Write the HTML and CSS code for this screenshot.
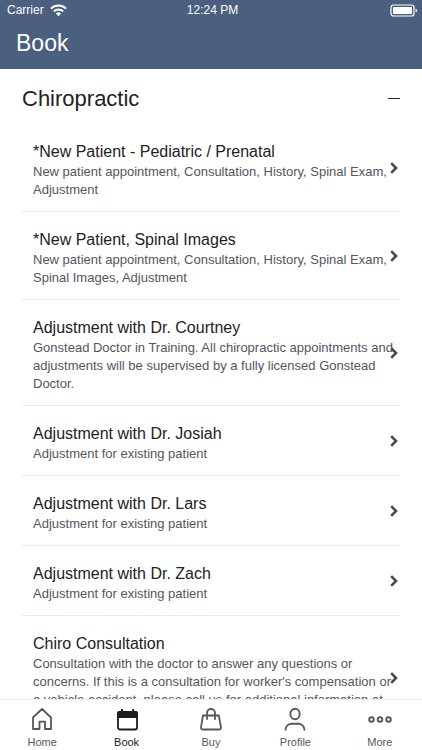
FILE: index.html
```html
<!DOCTYPE html>
<html lang="en">
<head>
<meta charset="utf-8">
<meta name="viewport" content="width=device-width, initial-scale=1">
<title>Book</title>
<link rel="stylesheet" href="styles.css">
</head>
<body>
<svg class="sprite" aria-hidden="true">
  <symbol id="chevron" viewBox="0 0 8 12"><path d="M1.2 1.2 6 6 1.2 10.8" fill="none" stroke="currentColor" stroke-width="2.6"/></symbol>
</svg>
<header class="header">
  <div class="status">
    <div class="carrier">
      <span>Carrier</span>
      <svg width="17" height="13" viewBox="0 0 17 13" aria-hidden="true">
        <path d="M1 4.6a10.8 10.8 0 0 1 15 0M3.8 7.4a6.8 6.8 0 0 1 9.4 0" fill="none" stroke="#fff" stroke-width="2"/>
        <path d="M5.9 9.4a3.8 3.8 0 0 1 5.200 0L8.500 12.200z" fill="#fff"/>
      </svg>
    </div>
    <time>12:24 PM</time>
    <svg class="battery" width="28" height="13" viewBox="0 0 28 13" aria-hidden="true">
      <rect x="1" y="1" width="23" height="11" rx="2.5" fill="none" stroke="#fff" stroke-width="1.2"/>
      <rect x="3" y="3" width="19" height="7" rx="0.5" fill="#fff"/>
      <path d="M25.6 4.4c2 .8 2 3.4 0 4.2z" fill="#fff"/>
    </svg>
  </div>
  <h1 class="title">Book</h1>
</header>
<main class="content">
  <h2 class="section"><button class="toggle" type="button" aria-expanded="true">Chiropractic<span class="minus"></span></button></h2>
  <ul class="list">
    <li><a class="item" href="#"><span class="name">*New Patient - Pediatric / Prenatal</span><span class="text">New patient appointment, Consultation, History, Spinal Exam, Adjustment</span><svg class="chevron" aria-hidden="true"><use href="#chevron"/></svg></a></li>
    <li><a class="item" href="#"><span class="name">*New Patient, Spinal Images</span><span class="text">New patient appointment, Consultation, History, Spinal Exam, Spinal Images, Adjustment</span><svg class="chevron" aria-hidden="true"><use href="#chevron"/></svg></a></li>
    <li><a class="item" href="#"><span class="name">Adjustment with Dr. Courtney</span><span class="text">Gonstead Doctor in Training. All chiropractic appointments and adjustments will be supervised by a fully licensed Gonstead Doctor.</span><svg class="chevron" aria-hidden="true"><use href="#chevron"/></svg></a></li>
    <li><a class="item" href="#"><span class="name">Adjustment with Dr. Josiah</span><span class="text">Adjustment for existing patient</span><svg class="chevron" aria-hidden="true"><use href="#chevron"/></svg></a></li>
    <li><a class="item" href="#"><span class="name">Adjustment with Dr. Lars</span><span class="text">Adjustment for existing patient</span><svg class="chevron" aria-hidden="true"><use href="#chevron"/></svg></a></li>
    <li><a class="item" href="#"><span class="name">Adjustment with Dr. Zach</span><span class="text">Adjustment for existing patient</span><svg class="chevron" aria-hidden="true"><use href="#chevron"/></svg></a></li>
    <li><a class="item" href="#"><span class="name">Chiro Consultation</span><span class="text">Consultation with the doctor to answer any questions or concerns. If this is a consultation for worker's compensation or a vehicle accident, please call us for additional information at<br>&nbsp;</span><svg class="chevron" aria-hidden="true"><use href="#chevron"/></svg></a></li>
  </ul>
</main>
<nav class="tabs">
  <a class="tab" href="#">
    <svg class="icon" viewBox="0 0 24 24" aria-hidden="true"><path d="M3 10.500 12 2l9 8.500V22h-6v-7.300H9.500V22H3z" fill="none" stroke="currentColor" stroke-width="1.8" stroke-linejoin="round"/></svg>
    <span>Home</span>
  </a>
  <a class="tab active" href="#" aria-current="page">
    <svg class="icon" viewBox="0 0 24 24" aria-hidden="true"><rect x="3" y="5" width="19" height="17.500" rx="2" fill="none" stroke="currentColor" stroke-width="1.8"/><path d="M2.100 11V6q0-2 2-2H6V2h2v2h9.200V2h2v2h1.700q2 0 2 2v5z" fill="currentColor"/></svg>
    <span>Book</span>
  </a>
  <a class="tab" href="#">
    <svg class="icon" viewBox="0 0 24 24" aria-hidden="true"><path d="M4 8.500h15.800L22 20.300q.2 2.200-2 2.200H4q-2.200 0-2-2.200zM8 12V6a4 4 0 0 1 8 0v6" fill="none" stroke="currentColor" stroke-width="1.800" stroke-linejoin="round" stroke-linecap="round"/></svg>
    <span>Buy</span>
  </a>
  <a class="tab" href="#">
    <svg class="icon" viewBox="0 0 24 24" aria-hidden="true"><ellipse cx="12" cy="7" rx="4.700" ry="5.200" fill="none" stroke="currentColor" stroke-width="1.900"/><path d="M2.500 23.500c0-4.500 3-6.800 6.500-6.800h6c3.500 0 6.500 2.300 6.500 6.800" fill="none" stroke="currentColor" stroke-width="1.900"/></svg>
    <span>Profile</span>
  </a>
  <a class="tab" href="#">
    <svg class="icon" viewBox="0 0 24 24" aria-hidden="true"><g fill="none" stroke="currentColor" stroke-width="1.900"><circle cx="3.500" cy="12.500" r="2.300"/><circle cx="12" cy="12.500" r="2.300"/><circle cx="20.500" cy="12.500" r="2.300"/></g></svg>
    <span>More</span>
  </a>
</nav>
</body>
</html>
```

FILE: styles.css
```css
* { box-sizing: border-box; }

body {
  margin: 0;
  height: 100vh;
  display: flex;
  flex-direction: column;
  background: #fff;
  color: #222;
  font-family: "Liberation Sans", Arial, sans-serif;
}

a { color: inherit; text-decoration: none; }

.sprite { display: none; }

.header {
  flex: none;
  padding: 0 4px 10px 7px;
  background: #4b5f7e;
  color: #fff;
}

.status {
  display: grid;
  grid-template-columns: 1fr auto 1fr;
  align-items: center;
  height: 20px;
  font-size: 12px;
}

.carrier { display: flex; align-items: center; gap: 6px; }
.battery { justify-self: end; }

.title {
  margin: 8px 9px 0;
  font-size: 23px;
  line-height: 31px;
  font-weight: 400;
}

.content {
  flex: 1;
  min-height: 0;
  overflow: hidden;
  padding: 0 22px;
}

.section { margin: 0; }

.toggle {
  display: flex;
  align-items: center;
  justify-content: space-between;
  width: 100%;
  height: 55px;
  padding: 4px 0 0;
  border: 0;
  background: none;
  color: inherit;
  font: 400 22px/28px "Liberation Sans", Arial, sans-serif;
}

.minus { width: 12px; height: 1px; background: #222; }

.list { margin: 0; padding: 0; list-style: none; }

.item {
  position: relative;
  display: block;
  padding: 17px 6px 12px 11px;
  border-bottom: 1px solid #ececec;
}

.name { display: block; font-size: 16px; line-height: 22px; }
.text { display: block; font-size: 13px; line-height: 18px; color: #53565c; }

.chevron {
  position: absolute;
  top: 50%;
  right: 2px;
  width: 8px;
  height: 12px;
  margin-top: -6px;
  color: #4a4a4c;
}

.tabs {
  flex: none;
  display: grid;
  grid-template-columns: repeat(5, 1fr);
  padding: 7px 0 1px;
  border-top: 1px solid #eee;
  background: #fff;
}

.tab {
  display: flex;
  flex-direction: column;
  align-items: center;
  gap: 4px;
  color: #55575d;
  font-size: 11px;
  line-height: 14px;
}

.active { color: #1d1d20; }
.icon { width: 24px; height: 24px; }
```
